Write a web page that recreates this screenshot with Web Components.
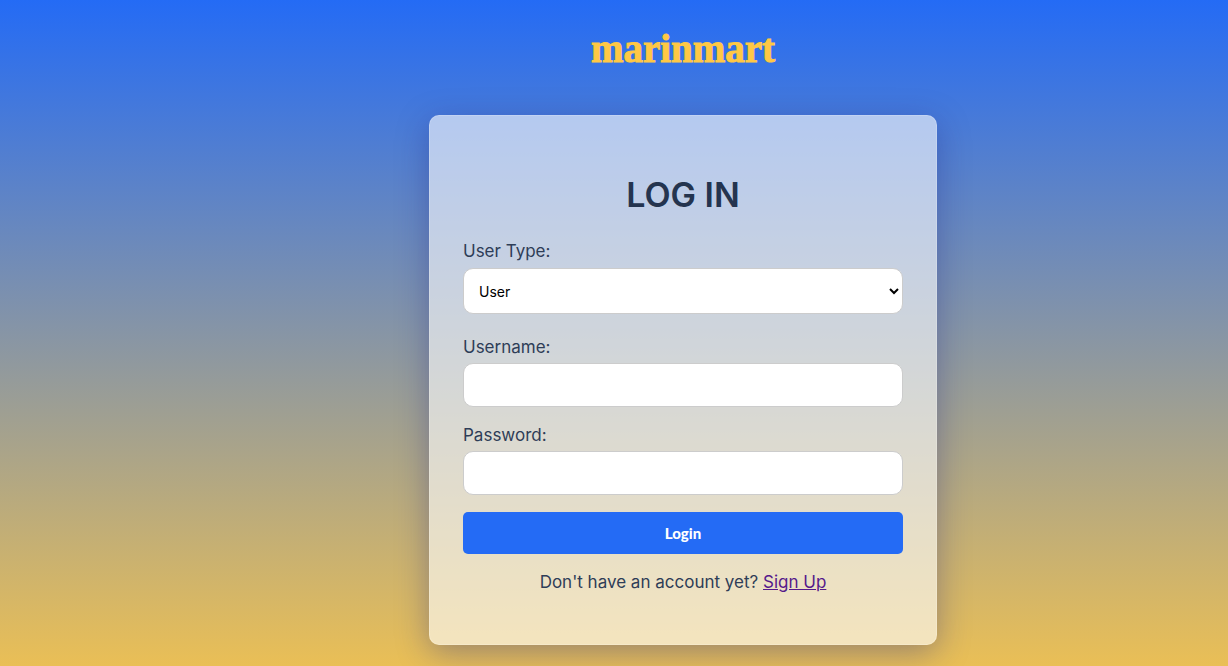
<!DOCTYPE html>
<html lang="en">
<head>
<meta charset="utf-8">
<meta name="viewport" content="width=device-width, initial-scale=1">
<title>marinmart</title>
<style>
html { background: #246bf5; }
body { margin: 0; color: #24344f; font: 400 17px/24px Inter, sans-serif; }
</style>
</head>
<body>
<mm-page>
  <mm-logo slot="brand">marinmart</mm-logo>
  <mm-card>
    <mm-login></mm-login>
  </mm-card>
</mm-page>
<script>
class Base extends HTMLElement {
  constructor() {
    super();
    this.attachShadow({ mode: "open" }).innerHTML = this.constructor.html;
  }
}

class MmPage extends Base {
  static html = `
    <style>
      :host { display: block; box-sizing: border-box; height: 100vh; min-height: 600px; overflow: hidden;
        padding-left: 138px;
        background: linear-gradient(#246bf5, #ffc845) 0 0 / 100% 737px; }
      header { display: flex; justify-content: center; padding: 25px 0 42px; }
      main { display: flex; justify-content: center; }
    </style>
    <header><slot name="brand"></slot></header>
    <main><slot></slot></main>`;
}

class MmLogo extends Base {
  static html = `
    <style>
      :host { display: block; color: #ffc845; font: bold 39px/48px "Liberation Serif", serif;
        -webkit-text-stroke: 1px #ffc845; }
    </style>
    <slot></slot>`;
}

class MmCard extends Base {
  static html = `
    <style>
      :host { display: block; box-sizing: border-box; width: 100%; max-width: 508px;
        padding: 55px 33px 50px;
        background: rgba(255, 255, 255, .6);
        border: 1px solid rgba(255, 255, 255, .18);
        border-radius: 10px;
        box-shadow: 0 8px 32px rgba(31, 38, 135, .37); }
    </style>
    <slot></slot>`;
}

class MmLogin extends Base {
  static html = `
    <style>
      :host { display: block; }
      form { display: flex; flex-direction: column; }
      h1 { margin: 0 0 20px; font: 600 34px/48px Inter, sans-serif; text-align: center; }
      label, p { color: #2e3d57; }
      .field { display: flex; flex-direction: column; gap: 4px; margin-bottom: 16px; }
      .choice { gap: 5px; margin-bottom: 21px; }
      input, select { box-sizing: border-box; width: 100%; height: 44px; margin: 0; padding: 0 14px;
        border: 1px solid #ccc; border-radius: 10px; background: #fff; color: #000;
        font: 14px/20px Inter, sans-serif; }
      select { height: 46px; padding: 0 1px 0 11px; }
      button { height: 42px; margin: 1px 0 16px; padding: 0; border: 0; border-radius: 5px;
        background: #246bf5; color: #fff; font: 900 15px/20px Lato, sans-serif; }
      p { margin: 0; text-align: center; }
      a { color: #551a8b; }
    </style>
    <form>
      <h1>LOG IN</h1>
      <div class="field choice">
        <label for="type">User Type:</label>
        <select id="type"><option>User</option><option>Admin</option></select>
      </div>
      <div class="field">
        <label for="username">Username:</label>
        <input id="username" type="text">
      </div>
      <div class="field">
        <label for="password">Password:</label>
        <input id="password" type="password">
      </div>
      <button type="button">Login</button>
      <p>Don't have an account yet? <a href="#signup">Sign Up</a></p>
    </form>`;
}

customElements.define("mm-page", MmPage);
customElements.define("mm-logo", MmLogo);
customElements.define("mm-card", MmCard);
customElements.define("mm-login", MmLogin);
</script>
</body>
</html>
